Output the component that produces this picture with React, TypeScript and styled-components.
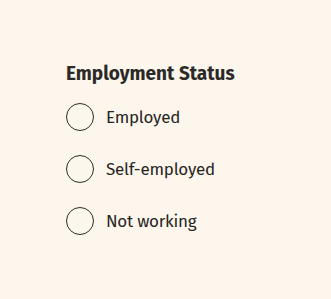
import React from 'react';
import styled, { createGlobalStyle } from 'styled-components';

const GlobalStyle = createGlobalStyle`
  html, body {
    margin: 0;
    padding: 0;
    background: #fdf6ec;
  }
  body {
    font-family: "Fira Sans", "Open Sans", "Noto Sans", sans-serif;
  }
`;

const Page = styled.div`
  min-height: 299px;
  padding: 62px 66px;
  box-sizing: border-box;
  background: #fdf6ec;
  color: #262523;
`;

const Fieldset = styled.fieldset`
  border: none;
  margin: 0;
  padding: 0;
  display: flex;
  flex-direction: column;
  gap: 24px;
`;

const Legend = styled.legend`
  padding: 0;
  margin-bottom: 18px;
  font-size: 19px;
  font-weight: 700;
  color: #2b2a28;
`;

const Option = styled.label`
  display: flex;
  align-items: center;
  gap: 12px;
  font-size: 17px;
  font-weight: 400;
  letter-spacing: -0.25px;
  cursor: pointer;
`;

const Radio = styled.input.attrs({ type: 'radio' })`
  appearance: none;
  margin: 0;
  width: 28px;
  height: 28px;
  border: 1.5px solid #2b2a28;
  border-radius: 50%;
  background: transparent;
  box-sizing: border-box;
`;

const options = ['Employed', 'Self-employed', 'Not working'];

const App: React.FC = () => {
  return (
    <>
      <GlobalStyle />
      <Page>
        <Fieldset>
          <Legend>Employment Status</Legend>
          {options.map((opt) => (
            <Option key={opt}>
              <Radio name="status" value={opt} />
              {opt}
            </Option>
          ))}
        </Fieldset>
      </Page>
    </>
  );
};

export default App;
